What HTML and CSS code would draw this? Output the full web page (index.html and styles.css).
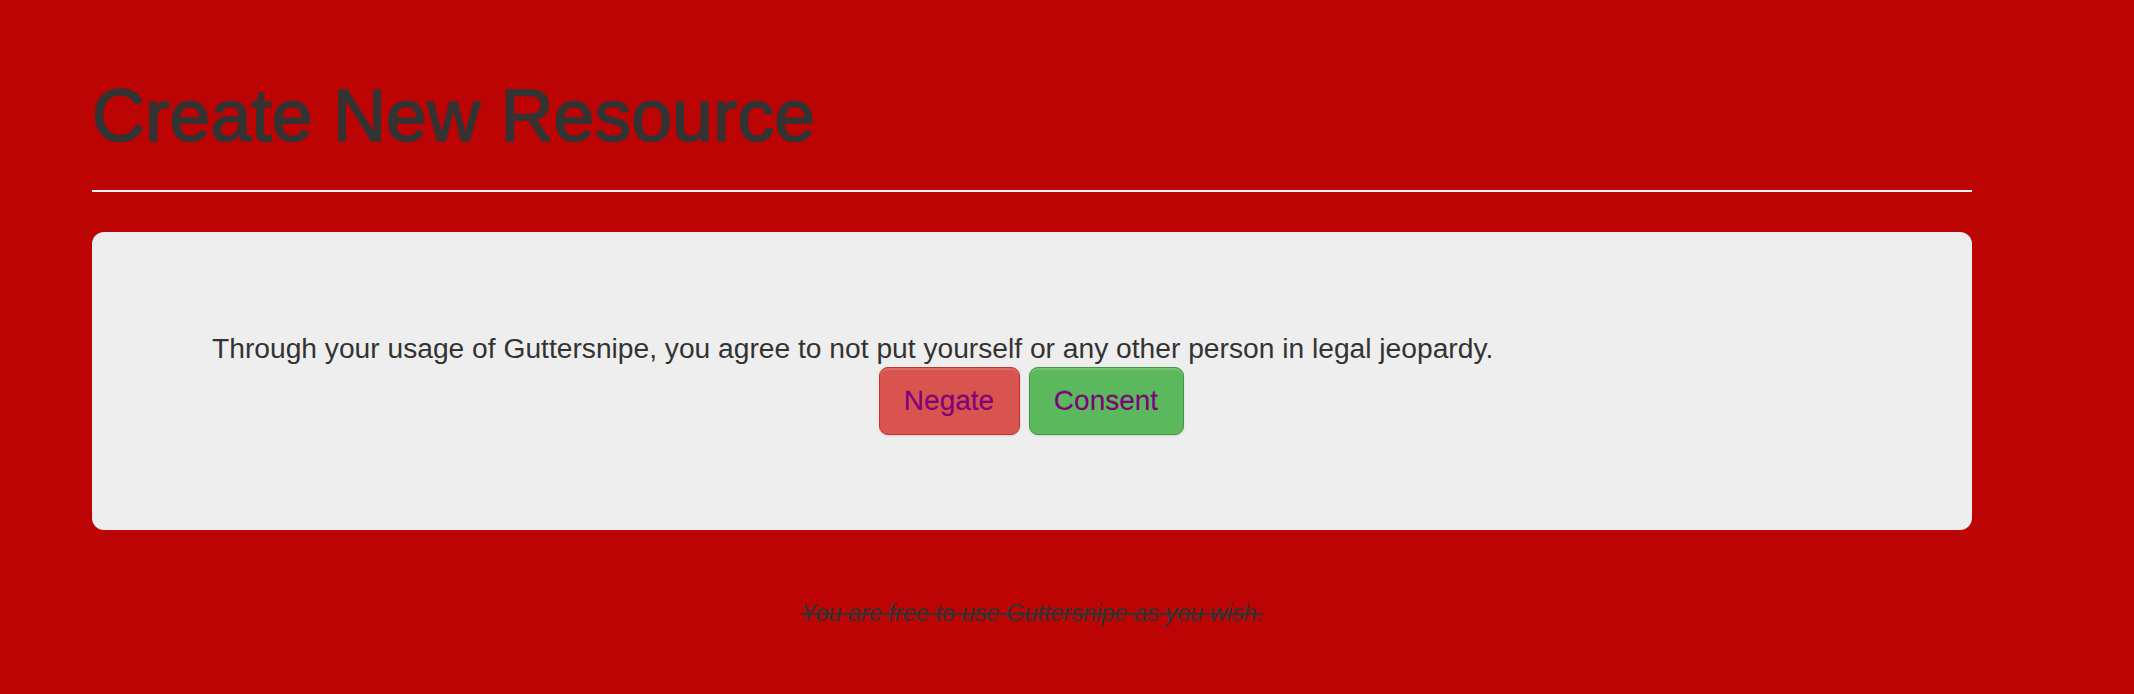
FILE: index.html
```html
<!DOCTYPE html>
<html lang="en">
<head>
<meta charset="utf-8">
<title>Create New Resource</title>
<link rel="stylesheet" href="styles.css">
</head>
<body>
<div class="container">
  <h1 class="page-title">Create New Resource</h1>
  <hr class="rule">
  <div class="panel">
    <p class="notice">Through your usage of Guttersnipe, you agree to not put yourself or any other person in legal jeopardy.</p>
    <div class="actions">
      <a class="btn btn-negate" href="#">Negate</a>
      <a class="btn btn-consent" href="#">Consent</a>
    </div>
  </div>
  <p class="footer-note">You are free to use Guttersnipe as you wish.</p>
</div>
</body>
</html>
```

FILE: styles.css
```css
html, body {
  margin: 0;
  padding: 0;
}
body {
  background: #bd0404;
  color: #333333;
  font-family: "Liberation Sans", Arial, Helvetica, sans-serif;
  width: 2134px;
  height: 694px;
  overflow: hidden;
}
.container {
  margin-left: 92px;
  width: 1880px;
  display: flex;
  flex-direction: column;
}
.page-title {
  margin: 75px 0 0 0;
  font-size: 73.5px;
  line-height: 81px;
  font-weight: 400;
  color: #333333;
  -webkit-text-stroke: 1.6px #333333;
}
.rule {
  margin: 34px 0 0 0;
  border: 0;
  border-top: 2px solid #f4f4f4;
  height: 0;
}
.panel {
  margin-top: 40px;
  background: #eeeeee;
  border-radius: 12px;
  padding: 97px 120px 95px 120px;
  display: flex;
  flex-direction: column;
}
.notice {
  margin: 0;
  font-size: 28.2px;
  line-height: 38px;
  color: #333333;
}
.actions {
  display: flex;
  justify-content: center;
  gap: 9px;
  margin-left: -2px;
}
.btn {
  display: inline-block;
  box-sizing: border-box;
  height: 68px;
  padding: 14px 24px;
  font-size: 28px;
  line-height: 38px;
  color: #800080;
  text-decoration: none;
  text-align: center;
  border-radius: 9px;
  border: 1px solid transparent;
  text-shadow: 0 -1px 0 rgba(0, 0, 0, 0.2);
  box-shadow: inset 0 2px 0 rgba(255, 255, 255, 0.15), 0 1px 2px rgba(0, 0, 0, 0.12);
}
.btn-negate {
  background: #d9534f;
  border-color: #c9302c;
  width: 141px;
}
.btn-consent {
  background: #5cb85c;
  border-color: #419641;
  width: 155px;
}
.footer-note {
  margin: 66px 0 0 0;
  text-align: center;
  font-size: 23.5px;
  line-height: 34px;
  font-style: italic;
  text-decoration: line-through;
  color: #333333;
}
```
